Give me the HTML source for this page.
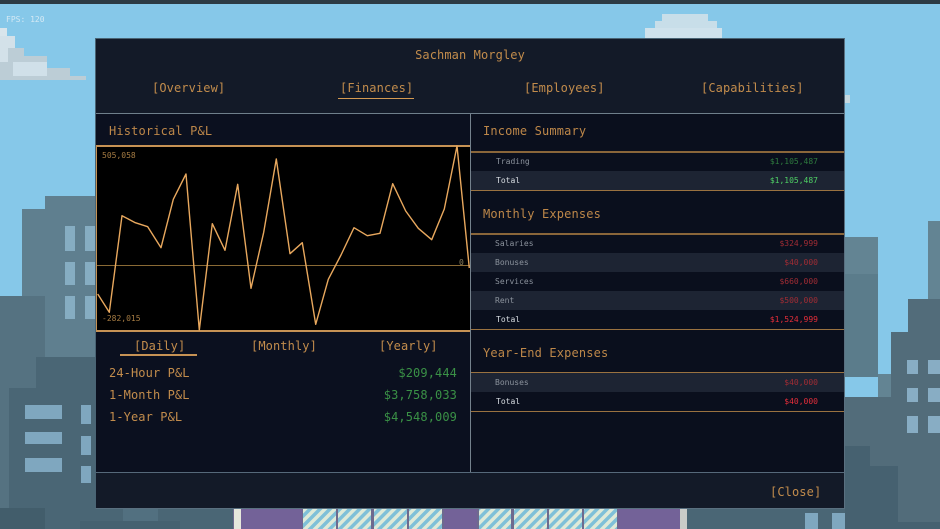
<!DOCTYPE html>
<html><head><meta charset="utf-8">
<style>
html,body{margin:0;padding:0;width:940px;height:529px;overflow:hidden;background:#86c8e9}
#s{position:relative;width:940px;height:529px;overflow:hidden;font-family:"DejaVu Sans Mono","Liberation Mono",monospace;filter:blur(.3px)}
#s div{position:absolute}
.r{box-sizing:border-box}
.t{white-space:pre;font-size:12px;line-height:14px;color:#c28c4c;letter-spacing:.1px}
.h{letter-spacing:.15px;color:#bd8749}
.sm{white-space:pre;font-size:8px;line-height:10px;letter-spacing:0}
.g{color:#3a9146;font-size:12px;line-height:14px;white-space:pre;letter-spacing:.1px}
.rt{text-align:right}
</style></head><body><div id="s">
<!-- top bar -->
<div style="left:0;top:0;width:940px;height:4px;background:#2c3b44"></div>
<!-- clouds -->
<div style="left:0;top:48px;width:24px;height:32px;background:#bccdd6"></div>
<div style="left:24px;top:56px;width:23px;height:24px;background:#bccdd6"></div>
<div style="left:0;top:28px;width:7px;height:8px;background:#d8e5ec"></div>
<div style="left:0;top:36px;width:15px;height:12px;background:#d3e1e9"></div>
<div style="left:0;top:48px;width:8px;height:14px;background:#d3e1e9"></div>
<div style="left:13px;top:62px;width:34px;height:14px;background:#d0e0e9"></div>
<div style="left:47px;top:68px;width:23px;height:12px;background:#bccdd6"></div>
<div style="left:70px;top:76px;width:16px;height:4px;background:#bccdd6"></div>
<div style="left:662px;top:14px;width:46px;height:24px;background:#c8dee9"></div>
<div style="left:655px;top:21px;width:62px;height:17px;background:#c8dee9"></div>
<div style="left:645px;top:28px;width:77px;height:10px;background:#cfe2ec"></div>
<div style="left:845px;top:95px;width:5px;height:8px;background:#c5d8df"></div>
<!-- FPS -->
<div class="sm" style="left:6px;top:15px;color:#d4e9f4">FPS: 120</div>
<!-- left buildings -->
<div style="left:22px;top:209px;width:80px;height:320px;background:#5f7f8f"></div>
<div style="left:45px;top:196px;width:55px;height:100px;background:#5f7f8f"></div>
<div style="left:65px;top:226px;width:10px;height:25px;background:#86adc2"></div>
<div style="left:85px;top:226px;width:10px;height:25px;background:#86adc2"></div>
<div style="left:65px;top:262px;width:10px;height:23px;background:#86adc2"></div>
<div style="left:85px;top:262px;width:10px;height:23px;background:#86adc2"></div>
<div style="left:65px;top:296px;width:10px;height:23px;background:#86adc2"></div>
<div style="left:85px;top:296px;width:10px;height:23px;background:#86adc2"></div>
<div style="left:0;top:296px;width:45px;height:233px;background:#557281"></div>
<div style="left:36px;top:357px;width:60px;height:60px;background:#4a6675"></div>
<div style="left:9px;top:388px;width:90px;height:141px;background:#4a6675"></div>
<div style="left:25px;top:405px;width:37px;height:14px;background:#7fa7bf"></div>
<div style="left:25px;top:432px;width:37px;height:12px;background:#7fa7bf"></div>
<div style="left:25px;top:458px;width:37px;height:14px;background:#7fa7bf"></div>
<div style="left:81px;top:405px;width:10px;height:19px;background:#7fa7bf"></div>
<div style="left:81px;top:436px;width:10px;height:19px;background:#7fa7bf"></div>
<div style="left:81px;top:466px;width:10px;height:17px;background:#7fa7bf"></div>
<div style="left:0;top:508px;width:45px;height:21px;background:#425d6b"></div>
<!-- bottom ground -->
<div style="left:95px;top:509px;width:139px;height:20px;background:#4a6675"></div>
<div style="left:123px;top:509px;width:35px;height:12px;background:#527080"></div>
<div style="left:80px;top:521px;width:100px;height:8px;background:#456170"></div>
<div style="left:687px;top:509px;width:160px;height:20px;background:#4a6675"></div>
<div style="left:805px;top:513px;width:13px;height:16px;background:#7fa7bf"></div>
<div style="left:832px;top:513px;width:13px;height:16px;background:#7fa7bf"></div>
<!-- right buildings -->
<div style="left:845px;top:237px;width:33px;height:140px;background:#638493"></div>
<div style="left:845px;top:274px;width:33px;height:103px;background:#5b7c8b"></div>
<div style="left:878px;top:374px;width:14px;height:24px;background:#638493"></div>
<div style="left:928px;top:221px;width:12px;height:90px;background:#638493"></div>
<div style="left:908px;top:299px;width:32px;height:40px;background:#526c7a"></div>
<div style="left:891px;top:332px;width:49px;height:197px;background:#526c7a"></div>
<div style="left:845px;top:397px;width:95px;height:132px;background:#526c7a"></div>
<div style="left:907px;top:360px;width:11px;height:14px;background:#88adc4"></div>
<div style="left:928px;top:360px;width:12px;height:14px;background:#88adc4"></div>
<div style="left:907px;top:388px;width:11px;height:14px;background:#88adc4"></div>
<div style="left:928px;top:388px;width:12px;height:14px;background:#88adc4"></div>
<div style="left:907px;top:416px;width:11px;height:17px;background:#88adc4"></div>
<div style="left:928px;top:416px;width:12px;height:17px;background:#88adc4"></div>
<div style="left:845px;top:446px;width:25px;height:83px;background:#466170"></div>
<div style="left:845px;top:466px;width:53px;height:63px;background:#466170"></div>
<div style="left:898px;top:522px;width:42px;height:7px;background:#466170"></div>
<!-- center building -->
<div style="left:233px;top:509px;width:454px;height:20px;background:#6e6a8e"></div>
<div style="left:234px;top:509px;width:7px;height:20px;background:#e6e8dc"></div>
<div style="left:680px;top:509px;width:7px;height:20px;background:#c9cbc8"></div>
<div style="left:241px;top:509px;width:61px;height:20px;background:#736298"></div>
<div style="left:444px;top:509px;width:33px;height:20px;background:#736298"></div>
<div style="left:618px;top:509px;width:62px;height:20px;background:#736298"></div>
<svg style="position:absolute;left:0;top:0" width="940" height="529">
<defs><pattern id="p" width="7" height="7" patternUnits="userSpaceOnUse" patternTransform="rotate(-45)"><rect width="7" height="7" fill="#7fc0d8"/><rect width="7" height="3.5" fill="#dfead8"/></pattern></defs>
<rect x="303" y="509" width="33" height="20" fill="url(#p)"/>
<rect x="338" y="509" width="33" height="20" fill="url(#p)"/>
<rect x="374" y="509" width="33" height="20" fill="url(#p)"/>
<rect x="409" y="509" width="33" height="20" fill="url(#p)"/>
<rect x="479" y="509" width="32" height="20" fill="url(#p)"/>
<rect x="514" y="509" width="33" height="20" fill="url(#p)"/>
<rect x="549" y="509" width="33" height="20" fill="url(#p)"/>
<rect x="584" y="509" width="33" height="20" fill="url(#p)"/>
</svg>
<!-- modal -->
<div class="r" style="left:95px;top:38px;width:750px;height:471px;background:#131a28;border:1px solid #5a7080;border-top-color:#4a6474;border-left-color:#4a6474"></div>
<div style="left:96px;top:113px;width:748px;height:1px;background:#6f7f8b"></div>
<div style="left:96px;top:114px;width:374px;height:358px;background:#0b101f"></div>
<div style="left:471px;top:114px;width:373px;height:358px;background:#0a0f1d"></div>
<div style="left:470px;top:114px;width:1px;height:358px;background:#74818c"></div>
<div style="left:96px;top:472px;width:748px;height:1px;background:#56697a"></div>
<!-- header text -->
<div class="t" style="left:95px;width:750px;text-align:center;top:48px">Sachman Morgley</div>
<div class="t" style="left:152px;top:81px">[Overview]</div>
<div class="t" style="left:340px;top:81px">[Finances]</div>
<div style="left:338px;top:98px;width:76px;height:1px;background:#d49a52"></div>
<div class="t" style="left:524px;top:81px">[Employees]</div>
<div class="t" style="left:701px;top:81px">[Capabilities]</div>
<!-- left -->
<div class="t h" style="left:109px;top:124px">Historical P&amp;L</div>
<div class="r" style="left:96px;top:145px;width:374px;height:187px;background:#000;border:2px solid #c69254;border-right:0;border-left-width:1px"></div>
<div style="left:97px;top:265px;width:373px;height:1px;background:#8a6a35"></div>
<svg style="position:absolute;left:0;top:0" width="940" height="529">
<polyline fill="none" stroke="#e8a85e" stroke-width="1.4" stroke-linejoin="round" points="97.7,294 109.3,312.3 122,215.7 135.3,222.7 147.7,226.7 161,247.7 173.3,199.3 186,174 199.3,330 212.3,223.7 225,250.3 237.7,184.3 251,288.3 263.7,232.3 276.3,159 290,253.7 302.3,242.7 315.7,324.3 328.3,279.3 341,255 354,227.7 367.3,235.7 380,233.3 392.7,183.7 405.7,211 418.3,228.3 431.7,239.7 444.3,209 457,146 469.3,268"/>
</svg>
<div class="sm" style="left:102px;top:151px;color:#a67c43">505,058</div>
<div class="sm" style="left:102px;top:314px;color:#a67c43">-282,015</div>
<div class="sm" style="left:459px;top:258px;color:#8c8060">0</div>
<div class="t" style="left:134px;top:339px">[Daily]</div>
<div style="left:120px;top:354px;width:77px;height:2px;background:#c69254"></div>
<div class="t" style="left:251px;top:339px">[Monthly]</div>
<div class="t" style="left:379px;top:339px">[Yearly]</div>
<div class="t" style="left:109px;top:366px">24-Hour P&amp;L</div>
<div class="t" style="left:109px;top:388px">1-Month P&amp;L</div>
<div class="t" style="left:109px;top:410px">1-Year P&amp;L</div>
<div class="g rt" style="left:300px;width:157px;top:366px">$209,444</div>
<div class="g rt" style="left:300px;width:157px;top:388px">$3,758,033</div>
<div class="g rt" style="left:300px;width:157px;top:410px">$4,548,009</div>
<!-- right rows backgrounds -->
<div style="left:471px;top:171px;width:373px;height:19px;background:#1d2433"></div>
<div style="left:471px;top:253px;width:373px;height:19px;background:#1d2433"></div>
<div style="left:471px;top:291px;width:373px;height:19px;background:#1d2433"></div>
<div style="left:471px;top:373px;width:373px;height:19px;background:#1d2433"></div>
<div style="left:471px;top:151px;width:373px;height:2px;background:#8a663a"></div>
<div style="left:471px;top:190px;width:373px;height:1px;background:#9a7240"></div>
<div style="left:471px;top:233px;width:373px;height:2px;background:#8a663a"></div>
<div style="left:471px;top:329px;width:373px;height:1px;background:#9a7240"></div>
<div style="left:471px;top:372px;width:373px;height:1px;background:#9a7240"></div>
<div style="left:471px;top:411px;width:373px;height:1px;background:#9a7240"></div>
<div class="t h" style="left:483px;top:124px">Income Summary</div>
<div class="t h" style="left:483px;top:207px">Monthly Expenses</div>
<div class="t h" style="left:483px;top:346px">Year-End Expenses</div>
<!-- right rows text -->
<div class="sm" style="left:496px;top:157px;color:#8b929c">Trading</div>
<div class="sm rt" style="left:700px;width:118px;top:157px;color:#2e7a3e">$1,105,487</div>
<div class="sm" style="left:496px;top:176px;color:#d8dde2">Total</div>
<div class="sm rt" style="left:700px;width:118px;top:176px;color:#4fd165">$1,105,487</div>
<div class="sm" style="left:495px;top:239px;color:#8b929c">Salaries</div>
<div class="sm rt" style="left:700px;width:118px;top:239px;color:#a02c34">$324,999</div>
<div class="sm" style="left:495px;top:258px;color:#8b929c">Bonuses</div>
<div class="sm rt" style="left:700px;width:118px;top:258px;color:#a02c34">$40,000</div>
<div class="sm" style="left:495px;top:277px;color:#8b929c">Services</div>
<div class="sm rt" style="left:700px;width:118px;top:277px;color:#a02c34">$660,000</div>
<div class="sm" style="left:495px;top:296px;color:#8b929c">Rent</div>
<div class="sm rt" style="left:700px;width:118px;top:296px;color:#a02c34">$500,000</div>
<div class="sm" style="left:496px;top:315px;color:#d8dde2">Total</div>
<div class="sm rt" style="left:700px;width:118px;top:315px;color:#e52e3a">$1,524,999</div>
<div class="sm" style="left:495px;top:378px;color:#8b929c">Bonuses</div>
<div class="sm rt" style="left:700px;width:118px;top:378px;color:#a02c34">$40,000</div>
<div class="sm" style="left:496px;top:397px;color:#d8dde2">Total</div>
<div class="sm rt" style="left:700px;width:118px;top:397px;color:#e52e3a">$40,000</div>
<div class="t" style="left:770px;top:485px">[Close]</div>
</div></body></html>
